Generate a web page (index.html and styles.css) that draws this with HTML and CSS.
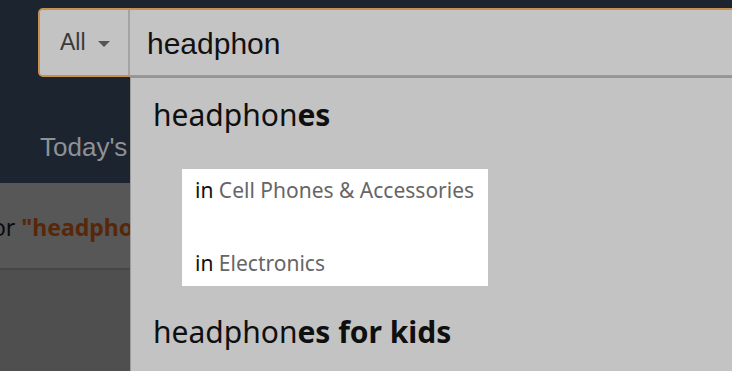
FILE: index.html
```html
<!DOCTYPE html>
<html lang="en">
<head>
  <meta charset="UTF-8">
  <meta name="viewport" content="width=device-width, initial-scale=1.0">
  <title>Search - headphon</title>
  <link rel="stylesheet" href="styles.css">
</head>
<body>
  <header class="nav">
    <form class="search-bar">
      <div class="scope">
        <span>All</span>
        <span class="caret"></span>
      </div>
      <input class="search-input" type="text" value="headphon">
    </form>
    <a class="nav-link" href="#">Today's Deals</a>
  </header>

  <div class="results-bar">
    <span class="results-text">for <b>"headphones"</b></span>
  </div>

  <div class="suggestions">
    <div class="suggestion">headphon<b>es</b></div>
    <div class="departments">
      <div class="dept"><span class="dept-in">in</span> Cell Phones &amp; Accessories</div>
      <div class="dept"><span class="dept-in">in</span> Electronics</div>
    </div>
    <div class="suggestion second">headphon<b>es for kids</b></div>
  </div>
</body>
</html>
```

FILE: styles.css
```css
body {
  margin: 0;
  width: 732px;
  height: 371px;
  overflow: hidden;
  position: relative;
  background-color: #4f4f4f;
  font-family: "Liberation Sans", Arial, sans-serif;
}
.nav {
  background-color: #1c2430;
  height: 183px;
  padding-top: 8px;
  box-sizing: border-box;
  display: flex;
  flex-direction: column;
}
.search-bar {
  display: flex;
  width: 720px;
  height: 69px;
  margin: 0 0 0 38px;
  border: 2px solid #c8914f;
  border-radius: 5px;
  box-sizing: border-box;
  background-color: #c4c4c4;
}
.scope {
  width: 90px;
  border-right: 2px solid #a3a3a3;
  display: flex;
  align-items: center;
  padding-left: 20px;
  box-sizing: border-box;
  font-size: 23px;
  color: #3a3a3a;
  border-radius: 3px 0 0 3px;
  background-color: #c3c3c3;
}
.caret {
  width: 0;
  height: 0;
  margin-left: 12px;
  margin-top: 2px;
  border-left: 6px solid transparent;
  border-right: 6px solid transparent;
  border-top: 6px solid #555;
}
.search-input {
  flex: 1;
  border: none;
  background: transparent;
  padding: 2px 0 0 17px;
  font-family: inherit;
  font-size: 30px;
  color: #111;
  outline: none;
}
.nav-link {
  margin-top: 56px;
  padding-left: 40px;
  font-size: 26px;
  line-height: 29px;
  color: #8e9196;
  text-decoration: none;
  white-space: nowrap;
}
.results-bar {
  height: 87px;
  background-color: #575757;
  border-bottom: 2px solid #474747;
  box-sizing: border-box;
  padding-top: 29px;
  overflow: hidden;
  white-space: nowrap;
}
.results-text {
  display: inline-block;
  margin-left: -16px;
  font-family: "Noto Sans", sans-serif;
  font-size: 23px;
  line-height: 31px;
  color: #0b0b0b;
}
.results-text b {
  color: #582709;
}
.suggestions {
  position: absolute;
  left: 130px;
  top: 76px;
  right: 0;
  bottom: 0;
  background-color: #c3c3c3;
  border-top: 2px solid #959595;
  border-left: 1px solid #9c9c9c;
  font-family: "Noto Sans", sans-serif;
}
.suggestion {
  padding: 17px 0 0 22px;
  font-size: 30px;
  line-height: 40px;
  color: #0f0f0f;
}
.suggestion.second {
  padding-top: 26px;
}
.departments {
  width: 306px;
  margin: 34px 0 0 51px;
  padding: 7px 13px 9px;
  box-sizing: border-box;
  background-color: #fff;
  display: flex;
  flex-direction: column;
  gap: 45px;
}
.dept {
  font-size: 21px;
  line-height: 28px;
  color: #666;
  white-space: nowrap;
}
.dept-in {
  color: #111;
}
```
